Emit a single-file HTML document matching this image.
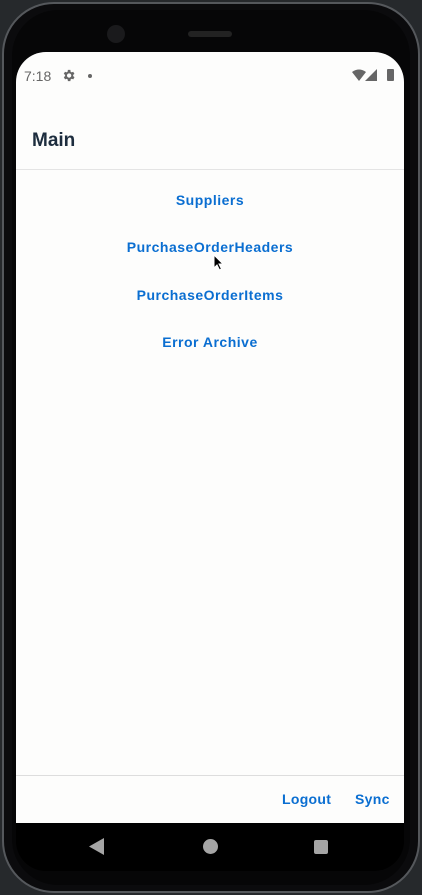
<!DOCTYPE html>
<html><head><style>
html,body{margin:0;padding:0;width:422px;height:895px;overflow:hidden;background:#26292c;font-family:"Liberation Sans",sans-serif}
.phone{position:absolute;left:2px;top:2px;width:418px;height:891px;border-radius:52px;background:#0b0b0d;border:2px solid #55585c;box-sizing:border-box}
.inner{position:absolute;left:8px;top:6px;width:398px;height:875px;border-radius:46px;background:#060607}
.screen{position:absolute;left:16px;top:52px;width:388px;height:771px;background:#fdfdfc;border-radius:30px 30px 0 0;overflow:hidden}
.nav{position:absolute;left:16px;top:823px;width:388px;height:48px;background:#000;border-radius:0 0 30px 30px}
.t{position:absolute;color:#666;font-size:14px}
.link{position:absolute;left:0;width:388px;text-align:center;color:#0a6ed1;font-weight:bold;font-size:14px;letter-spacing:.5px}
</style></head><body>
<div class="phone"><div class="inner"></div></div>
<div style="position:absolute;left:107px;top:25px;width:18px;height:18px;border-radius:50%;background:#1a1a1c"></div>
<div style="position:absolute;left:188px;top:31px;width:44px;height:6px;border-radius:3px;background:#222"></div>
<div class="screen">
  <div class="t" style="left:8px;top:16px">7:18</div>
  <svg style="position:absolute;left:45px;top:16px" width="15" height="15" viewBox="0 0 24 24"><path fill="#666" d="M19.4 13a7.5 7.5 0 000-2l2.1-1.6-2-3.5-2.5 1a7 7 0 00-1.7-1L15 3h-4l-.4 2.9a7 7 0 00-1.7 1l-2.5-1-2 3.5L6.6 11a7.5 7.5 0 000 2l-2.1 1.6 2 3.5 2.5-1a7 7 0 001.7 1L11 21h4l.4-2.9a7 7 0 001.7-1l2.5 1 2-3.5zM13 15.5a3.5 3.5 0 110-7 3.5 3.5 0 010 7z"/></svg>
  <div style="position:absolute;left:72px;top:22px;width:4px;height:4px;border-radius:50%;background:#666"></div>
  <svg style="position:absolute;left:336px;top:17px" width="46" height="13" viewBox="0 0 46 13"><path fill="#666" d="M0 3Q7-2 14 3L7 12z"/><path fill="#666" d="M25 0V12H13z"/><rect x="35" y="0" width="7" height="12" rx="1" fill="#666"/></svg>
  <div style="position:absolute;left:16px;top:78px;font-size:19px;font-weight:bold;color:#1d2d3e">Main</div>
  <div style="position:absolute;left:0;top:117px;width:388px;height:1px;background:#e4e4e4"></div>
  <div class="link" style="top:140px">Suppliers</div>
  <div class="link" style="top:187px">PurchaseOrderHeaders</div>
  <div class="link" style="top:235px">PurchaseOrderItems</div>
  <div class="link" style="top:282px">Error Archive</div>
  <div style="position:absolute;left:0;top:723px;width:388px;height:1px;background:#ddd"></div>
  <div style="position:absolute;left:266px;top:739px;color:#0a6ed1;font-weight:bold;font-size:14px;letter-spacing:.3px">Logout</div>
  <div style="position:absolute;left:339px;top:739px;color:#0a6ed1;font-weight:bold;font-size:14px;letter-spacing:.3px">Sync</div>
  <svg style="position:absolute;left:197px;top:202px" width="11" height="17" viewBox="0 0 11 17"><path d="M1 1V14L4 11L6.5 16L8.5 15L6 10H10Z" fill="#000" stroke="#fff" stroke-width="1"/></svg>
</div>
<div class="nav">
  <svg style="position:absolute;left:73px;top:15px" width="16" height="17"><path d="M15 0V17L0 8.5z" fill="#a5a5a5"/></svg>
  <div style="position:absolute;left:187px;top:16px;width:15px;height:15px;border-radius:50%;background:#a5a5a5"></div>
  <div style="position:absolute;left:298px;top:17px;width:14px;height:14px;border-radius:2px;background:#a5a5a5"></div>
</div>
</body></html>
